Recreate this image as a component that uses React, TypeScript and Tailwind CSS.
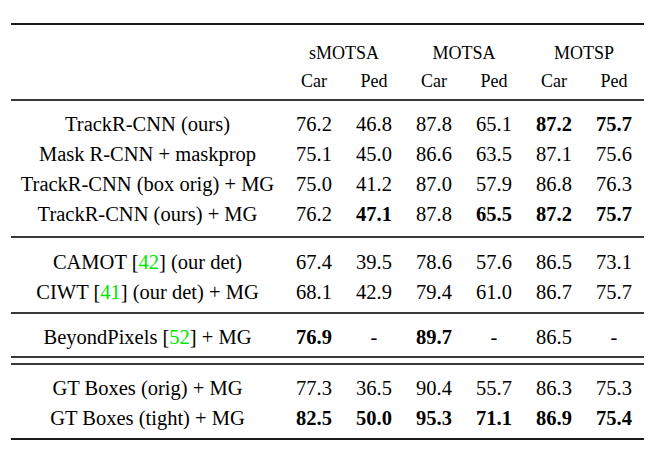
const groups = [
  [
    { label: ["TrackR-CNN (ours)"], vals: ["76.2", "46.8", "87.8", "65.1", "87.2", "75.7"], bold: [4, 5] },
    { label: ["Mask R-CNN + maskprop"], vals: ["75.1", "45.0", "86.6", "63.5", "87.1", "75.6"], bold: [] },
    { label: ["TrackR-CNN (box orig) + MG"], vals: ["75.0", "41.2", "87.0", "57.9", "86.8", "76.3"], bold: [] },
    { label: ["TrackR-CNN (ours) + MG"], vals: ["76.2", "47.1", "87.8", "65.5", "87.2", "75.7"], bold: [1, 3, 4, 5] },
  ],
  [
    { label: ["CAMOT ", "42", " (our det)"], vals: ["67.4", "39.5", "78.6", "57.6", "86.5", "73.1"], bold: [] },
    { label: ["CIWT ", "41", " (our det) + MG"], vals: ["68.1", "42.9", "79.4", "61.0", "86.7", "75.7"], bold: [] },
  ],
  [
    { label: ["BeyondPixels ", "52", " + MG"], vals: ["76.9", "-", "89.7", "-", "86.5", "-"], bold: [0, 2] },
  ],
  [
    { label: ["GT Boxes (orig) + MG"], vals: ["77.3", "36.5", "90.4", "55.7", "86.3", "75.3"], bold: [] },
    { label: ["GT Boxes (tight) + MG"], vals: ["82.5", "50.0", "95.3", "71.1", "86.9", "75.4"], bold: [0, 1, 2, 3, 4, 5] },
  ],
];

type Row = (typeof groups)[number][number];

function Label({ parts }: { parts: string[] }) {
  if (parts.length === 1) return <>{parts[0]}</>;
  return (
    <>
      {parts[0]}[<span className="text-[#00e600]">{parts[1]}</span>]{parts[2]}
    </>
  );
}

function DataRow({ row }: { row: Row }) {
  return (
    <div className="flex h-[30px] items-center leading-[30px]">
      <div className="w-[273px] text-center whitespace-nowrap">
        <Label parts={row.label} />
      </div>
      {row.vals.map((v, i) => (
        <div key={i} className={`w-[60px] text-center ${row.bold.includes(i) ? "font-bold" : ""}`}>
          {v}
        </div>
      ))}
    </div>
  );
}

export default function App() {
  return (
    <div className="w-[669px] h-[460px] bg-white text-black pt-[23px] pl-[11px] text-[20.5px] font-['Liberation_Serif','Times_New_Roman',Times,serif]">
      <div className="w-[633px]">
        <div className="h-[2px] bg-[#1a1a1a]" />

        {/* header */}
        <div className="mt-[14px] flex h-[28px] items-center text-[18px]">
          <div className="w-[273px]" />
          <div className="w-[120px] text-center">sMOTSA</div>
          <div className="w-[120px] text-center">MOTSA</div>
          <div className="w-[120px] text-center">MOTSP</div>
        </div>
        <div className="flex h-[28px] items-center text-[18px]">
          <div className="w-[273px]" />
          {["Car", "Ped", "Car", "Ped", "Car", "Ped"].map((h, i) => (
            <div key={i} className="w-[60px] text-center">
              {h}
            </div>
          ))}
        </div>
        <div className="mt-[4px] h-[2px] bg-[#3a3a3a]" />

        <div className="pt-[8px]">
          {groups[0].map((r, i) => (
            <DataRow key={i} row={r} />
          ))}
        </div>
        <div className="mt-[7px] h-[2px] bg-[#3a3a3a]" />

        <div className="pt-[9px]">
          {groups[1].map((r, i) => (
            <DataRow key={i} row={r} />
          ))}
        </div>
        <div className="mt-[5px] h-[2px] bg-[#3a3a3a]" />

        <div className="pt-[8px]">
          {groups[2].map((r, i) => (
            <DataRow key={i} row={r} />
          ))}
        </div>
        <div className="mt-[4px] h-[2px] bg-[#3a3a3a]" />
        <div className="mt-[5px] h-[2px] bg-[#3a3a3a]" />

        <div className="pt-[8px]">
          {groups[3].map((r, i) => (
            <DataRow key={i} row={r} />
          ))}
        </div>
        <div className="mt-[5px] h-[2px] bg-[#1a1a1a]" />
      </div>
    </div>
  );
}
